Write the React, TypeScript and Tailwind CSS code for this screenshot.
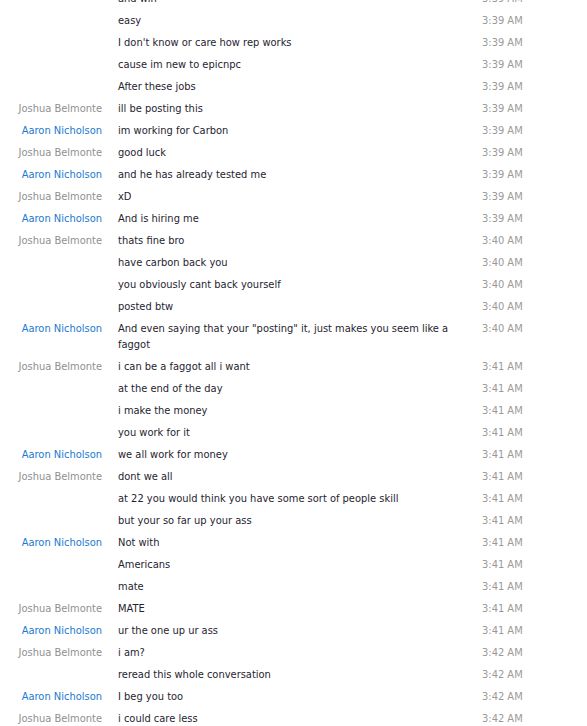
const J = "Joshua Belmonte";
const A = "Aaron Nicholson";

type Msg = { who?: string; text: string; time: string };

const messages: Msg[] = [
  { text: "and win", time: "3:39 AM" },
  { text: "easy", time: "3:39 AM" },
  { text: "I don't know or care how rep works", time: "3:39 AM" },
  { text: "cause im new to epicnpc", time: "3:39 AM" },
  { text: "After these jobs", time: "3:39 AM" },
  { who: J, text: "ill be posting this", time: "3:39 AM" },
  { who: A, text: "im working for Carbon", time: "3:39 AM" },
  { who: J, text: "good luck", time: "3:39 AM" },
  { who: A, text: "and he has already tested me", time: "3:39 AM" },
  { who: J, text: "xD", time: "3:39 AM" },
  { who: A, text: "And is hiring me", time: "3:39 AM" },
  { who: J, text: "thats fine bro", time: "3:40 AM" },
  { text: "have carbon back you", time: "3:40 AM" },
  { text: "you obviously cant back yourself", time: "3:40 AM" },
  { text: "posted btw", time: "3:40 AM" },
  {
    who: A,
    text: 'And even saying that your "posting" it, just makes you seem like a faggot',
    time: "3:40 AM",
  },
  { who: J, text: "i can be a faggot all i want", time: "3:41 AM" },
  { text: "at the end of the day", time: "3:41 AM" },
  { text: "i make the money", time: "3:41 AM" },
  { text: "you work for it", time: "3:41 AM" },
  { who: A, text: "we all work for money", time: "3:41 AM" },
  { who: J, text: "dont we all", time: "3:41 AM" },
  { text: "at 22 you would think you have some sort of people skill", time: "3:41 AM" },
  { text: "but your so far up your ass", time: "3:41 AM" },
  { who: A, text: "Not with", time: "3:41 AM" },
  { text: "Americans", time: "3:41 AM" },
  { text: "mate", time: "3:41 AM" },
  { who: J, text: "MATE", time: "3:41 AM" },
  { who: A, text: "ur the one up ur ass", time: "3:41 AM" },
  { who: J, text: "i am?", time: "3:42 AM" },
  { text: "reread this whole conversation", time: "3:42 AM" },
  { who: A, text: "I beg you too", time: "3:42 AM" },
  { who: J, text: "i could care less", time: "3:42 AM" },
];

function Row({ m }: { m: Msg }) {
  return (
    <div className="flex py-[3px] leading-4">
      <div
        className={
          "w-[102px] shrink-0 text-right " +
          (m.who === A ? "text-[#1a7ad0]" : "text-[#8f8f8f]")
        }
      >
        {m.who ?? ""}
      </div>
      <div className="ml-4 w-[340px] shrink-0 text-[#1f2430]">{m.text}</div>
      <div className="ml-[24px] text-[#9a9a9a]">{m.time}</div>
    </div>
  );
}

export default function App() {
  return (
    <div className="h-[726px] w-[587px] overflow-hidden bg-white font-['DejaVu_Sans_Condensed','DejaVu_Sans',sans-serif] font-stretch-condensed text-[11px]">
      <div className="-mt-[12px]">
        {messages.map((m, i) => (
          <Row key={i} m={m} />
        ))}
      </div>
    </div>
  );
}
